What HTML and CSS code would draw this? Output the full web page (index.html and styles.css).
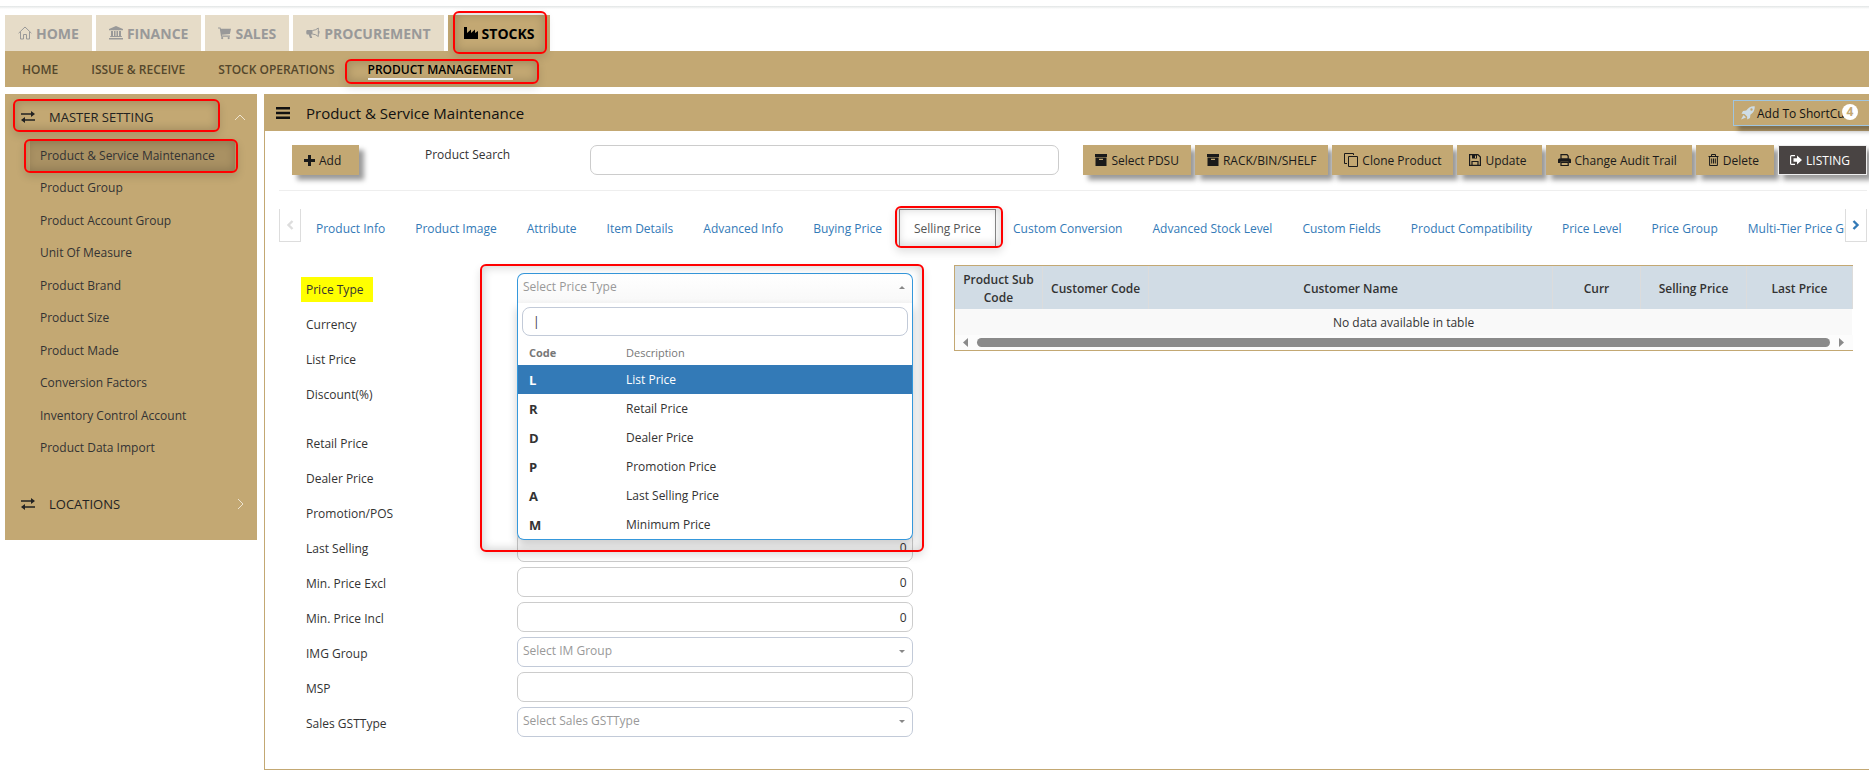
FILE: index.html
```html
<!DOCTYPE html>
<html lang="en">
  <head>
    <title>Product &amp; Service Maintenance</title>
    <meta charset="UTF-8" />
    <meta name="viewport" content="width=device-width, initial-scale=1.0" />
    <link rel="stylesheet" href="styles.css">
  </head>
  <body>
    <div class="top-line"></div>

    <nav class="modules">
      <a href="#">
        <svg width="14" height="14" viewBox="0 0 14 14"><path d="M.6 7.2 7 1l6.400 6.200M2.500 6v7h3V8.500h3V13h3V6" fill="none" stroke="currentColor"/></svg>
        HOME</a>
      <a href="#">
        <svg width="14" height="14" viewBox="0 0 14 14"><path d="M7 0 14 3v1.200H0V3zM2 5h2v5h1V5h1.500v5h1V5H9v5h1V5h2v5h.8v1H1.200v-1H2zM0 12h14v1.500H0z"/></svg>
        FINANCE</a>
      <a href="#">
        <svg width="13" height="14" viewBox="0 0 14 14"><path d="M0 1h2.600l.5 1.500H14L12.800 8l-8.600 1 .2.800h8.400V11H3.300L1.900 2.200H0z"/><circle cx="4.500" cy="12.500" r="1.200"/><circle cx="11.500" cy="12.500" r="1.200"/></svg>
        SALES</a>
      <a href="#">
        <svg width="14" height="14" viewBox="0 0 14 14"><path d="M1 4h5.500v4.500H5L6.300 12H4L2.700 8.500H1c-1 0-1-4.500 0-4.500z"/><path d="M6.500 4.500Q10 4.200 12.300 2v8.500Q10 8.300 6.500 8" fill="none" stroke="currentColor"/><path d="M12.300 5h1.200v2.500h-1.200z"/></svg>
        PROCUREMENT</a>
      <a href="#" class="active marked mark-stocks">
        <svg width="14" height="14" viewBox="0 0 14 14"><path d="M0 1h3v6l4-3.500V7l4-3.500V7l3-2v8H0z"/></svg>
        STOCKS</a>
    </nav>

    <nav class="submenu">
      <a href="#">HOME</a>
      <a href="#">ISSUE &amp; RECEIVE</a>
      <a href="#">STOCK OPERATIONS</a>
      <a href="#" class="active marked mark-pm"><span>PRODUCT MANAGEMENT</span></a>
    </nav>

    <div class="page">
      <aside class="sidebar">
        <a href="#" class="group marked mark-master">
          <svg width="14" height="12" viewBox="0 0 14 12"><path d="M0 2.200h10V0l4 3-4 3V3.800H0zM14 8.200H4V6L0 9l4 3V9.800h10z"/></svg>
          <span>MASTER SETTING</span>
          <svg class="chevron" width="12" height="12" viewBox="0 0 12 12"><path d="m1 9 5-5 5 5"/></svg>
        </a>
        <ul>
          <li class="active marked mark-item"><a href="#">Product &amp; Service Maintenance</a></li>
          <li><a href="#">Product Group</a></li>
          <li><a href="#">Product Account Group</a></li>
          <li><a href="#">Unit Of Measure</a></li>
          <li><a href="#">Product Brand</a></li>
          <li><a href="#">Product Size</a></li>
          <li><a href="#">Product Made</a></li>
          <li><a href="#">Conversion Factors</a></li>
          <li><a href="#">Inventory Control Account</a></li>
          <li><a href="#">Product Data Import</a></li>
        </ul>
        <a href="#" class="group">
          <svg width="14" height="12" viewBox="0 0 14 12"><path d="M0 2.200h10V0l4 3-4 3V3.800H0zM14 8.200H4V6L0 9l4 3V9.800h10z"/></svg>
          <span>LOCATIONS</span>
          <svg class="chevron" width="12" height="12" viewBox="0 0 12 12"><path d="m4 1 5 5-5 5"/></svg>
        </a>
      </aside>

      <main class="panel">
        <header>
          <svg width="14" height="12" viewBox="0 0 14 12"><path d="M0 0h14v2.500H0zM0 4.700h14v2.500H0zM0 9.400h14v2.500H0z"/></svg>
          <h1>Product &amp; Service Maintenance</h1>
          <button class="shortcut">
            <svg width="14" height="14" viewBox="0 0 14 14"><path d="M13.700.3C9.500 0 7 2 5.200 4.600L2 5 .5 7.800l3 .1 2.600 2.600.1 3L9 12l.4-3.200C12 7 14 4.500 13.700.3zM10.500 2.300a1.200 1.200 0 1 1 0 2.400 1.200 1.200 0 0 1 0-2.400zM2.500 9 0 13.500 5 11.500z" fill-rule="evenodd"/></svg>
            Add To ShortCut
            <span class="badge">4</span>
          </button>
        </header>

        <div class="toolbar">
          <button class="add">
            <svg width="11" height="11" viewBox="0 0 11 11"><path d="M4 0h3v4h4v3H7v4H4V7H0V4h4z"/></svg>
            Add</button>
          <label for="search">Product Search</label>
          <input type="text" id="search" name="search" />
          <div class="actions">
            <button>
              <svg width="12" height="12" viewBox="0 0 12 12"><path d="M0 0h12v3H0zM.5 3.600h11V12H.5zM4 4.800V6h4V4.800z" fill-rule="evenodd"/></svg>
              Select PDSU</button>
            <button>
              <svg width="12" height="12" viewBox="0 0 12 12"><path d="M0 0h12v3H0zM.5 3.600h11V12H.5zM4 4.800V6h4V4.800z" fill-rule="evenodd"/></svg>
              RACK/BIN/SHELF</button>
            <button>
              <svg width="14" height="14" viewBox="0 0 14 14"><path d="M4.500 3.500h9v10h-9zM3 10.500H.5V.5h9V2" fill="none" stroke="currentColor"/></svg>
              Clone Product</button>
            <button class="wide">
              <svg width="12" height="12" viewBox="0 0 12 12"><path d="M.6.6h8.300l2.500 2.500v8.300H.6zM3 11.400V7.500h6v3.900" fill="none" stroke="currentColor" stroke-width="1.200"/><path d="M3 1h5v3.500H3zM6 1.500V4h1V1.500z" fill-rule="evenodd"/></svg>
              Update</button>
            <button class="wide">
              <svg width="13" height="12" viewBox="0 0 13 12"><path d="M3 .6h6L10.200 2v3H3zM3 8.500h7.200v3H3z" fill="none" stroke="currentColor" stroke-width="1.200"/><path d="M1 4.500h11l1 1V9h-2.500V7.800h-8V9H0V5.500z"/></svg>
              Change Audit Trail</button>
            <button class="wide">
              <svg width="11" height="12" viewBox="0 0 11 12"><path d="M.5 2.500h10M3.500 2.500v-2h4v2M1.600 2.500v9h7.800v-9M3.700 4.500v5M5.500 4.500v5M7.300 4.500v5" fill="none" stroke="currentColor"/></svg>
              Delete</button>
            <button class="listing">
              <svg width="12" height="10" viewBox="0 0 12 10"><path d="M5 .6H1.500q-.9 0-.9.900v7q0 .9.900.9H5" fill="none" stroke="currentColor" stroke-width="1.200"/><path d="M3.500 3.200H7V.5L12 5 7 9.500V6.800H3.500z"/></svg>
              LISTING</button>
          </div>
        </div>

        <div class="tabs">
          <button class="arrow" aria-label="Previous tabs">
            <svg width="8" height="10" viewBox="0 0 8 10"><path d="M6.500 1 2.500 5l4 4" fill="none" stroke="currentColor" stroke-width="2.400"/></svg>
          </button>
          <div class="tab-list">
            <a href="#">Product Info</a>
            <a href="#">Product Image</a>
            <a href="#">Attribute</a>
            <a href="#">Item Details</a>
            <a href="#">Advanced Info</a>
            <a href="#">Buying Price</a>
            <a href="#" class="active marked mark-tab">Selling Price</a>
            <a href="#">Custom Conversion</a>
            <a href="#">Advanced Stock Level</a>
            <a href="#">Custom Fields</a>
            <a href="#">Product Compatibility</a>
            <a href="#">Price Level</a>
            <a href="#">Price Group</a>
            <a href="#">Multi-Tier Price Group</a>
          </div>
          <button class="arrow next" aria-label="Next tabs">
            <svg width="8" height="10" viewBox="0 0 8 10"><path d="m1.500 1 4 4-4 4" fill="none" stroke="currentColor" stroke-width="2.400"/></svg>
          </button>
        </div>

        <div class="columns">
          <form class="prices">
            <div class="row marked mark-type">
              <label for="price-type"><mark>Price Type</mark></label>
              <div class="select open">
                <select id="price-type"><option>Select Price Type</option></select>
                <div class="menu">
                  <input type="text" aria-label="Filter price types" value="|" />
                  <table>
                    <thead>
                      <tr><th>Code</th><td>Description</td></tr>
                    </thead>
                    <tbody>
                      <tr class="selected"><th>L</th><td>List Price</td></tr>
                      <tr><th>R</th><td>Retail Price</td></tr>
                      <tr><th>D</th><td>Dealer Price</td></tr>
                      <tr><th>P</th><td>Promotion Price</td></tr>
                      <tr><th>A</th><td>Last Selling Price</td></tr>
                      <tr><th>M</th><td>Minimum Price</td></tr>
                    </tbody>
                  </table>
                </div>
              </div>
            </div>
            <div class="row">
              <label for="currency">Currency</label>
              <input type="text" id="currency" />
            </div>
            <div class="row">
              <label for="list-price">List Price</label>
              <input type="text" id="list-price" />
            </div>
            <div class="row spaced">
              <label for="discount">Discount(%)</label>
              <input type="text" id="discount" />
            </div>
            <div class="row">
              <label for="retail">Retail Price</label>
              <input type="text" id="retail" />
            </div>
            <div class="row">
              <label for="dealer">Dealer Price</label>
              <input type="text" id="dealer" />
            </div>
            <div class="row">
              <label for="promotion">Promotion/POS</label>
              <input type="text" id="promotion" />
            </div>
            <div class="row">
              <label for="last-selling">Last Selling</label>
              <input type="text" id="last-selling" value="0" />
            </div>
            <div class="row">
              <label for="min-excl">Min. Price Excl</label>
              <input type="text" id="min-excl" value="0" />
            </div>
            <div class="row">
              <label for="min-incl">Min. Price Incl</label>
              <input type="text" id="min-incl" value="0" />
            </div>
            <div class="row">
              <label for="img-group">IMG Group</label>
              <div class="select">
                <select id="img-group"><option>Select IM Group</option></select>
              </div>
            </div>
            <div class="row">
              <label for="msp">MSP</label>
              <input type="text" id="msp" />
            </div>
            <div class="row">
              <label for="gst">Sales GSTType</label>
              <div class="select">
                <select id="gst"><option>Select Sales GSTType</option></select>
              </div>
            </div>
          </form>

          <div class="customers">
            <table>
              <colgroup>
                <col class="c-sub"><col class="c-code"><col><col class="c-curr"><col class="c-price"><col class="c-price">
              </colgroup>
              <thead>
                <tr>
                  <th>Product Sub Code</th>
                  <th>Customer Code</th>
                  <th>Customer Name</th>
                  <th>Curr</th>
                  <th>Selling Price</th>
                  <th>Last Price</th>
                </tr>
              </thead>
              <tbody>
                <tr><td colspan="6">No data available in table</td></tr>
              </tbody>
            </table>
            <div class="scrollbar">
              <svg width="5" height="9" viewBox="0 0 5 9"><path d="M5 0v9L0 4.500z"/></svg>
              <div class="thumb"></div>
              <svg width="5" height="9" viewBox="0 0 5 9"><path d="M0 0v9l5-4.500z"/></svg>
            </div>
          </div>
        </div>
      </main>
    </div>
  </body>
</html>
```

FILE: styles.css
```css
* {
  box-sizing: border-box;
}
body {
  margin: 0;
  overflow: hidden;
  background-color: #fff;
  color: #333;
  font-family: "Open Sans", "Noto Sans", sans-serif;
  font-size: 12px;
}
a {
  color: inherit;
  text-decoration: none;
}
svg {
  fill: currentColor;
  flex-shrink: 0;
}
button,
input,
select {
  font: inherit;
  color: inherit;
}
button {
  cursor: pointer;
}

.top-line {
  height: 9px;
  margin-bottom: 6px;
  background: linear-gradient(#fff 6px, #e2e5e5 6px, #fff 9px);
}

/* red callouts round the steps of the guide */
.marked {
  position: relative;
}
.marked::before {
  content: "";
  position: absolute;
  z-index: 5;
  border: 2px solid #f00;
  border-radius: 6px;
  box-shadow: 0 4px 8px rgba(0, 0, 0, 0.12), inset 0 0 8px 2px rgba(0, 0, 0, 0.16);
  pointer-events: none;
}
.mark-stocks::before {
  inset: -4px 3px -3px 5px;
}
.mark-pm::before {
  inset: 8px -26px 3px -23px;
}
.mark-master::before {
  inset: 5px 37px 4px 8px;
}
.mark-item::before {
  inset: 0 19px -1px;
}
.mark-tab::before {
  inset: -4px -8px -1px -5px;
}
.mark-type::before {
  inset: -9px -11px -249px 174px;
}

.modules {
  display: flex;
  gap: 4px;
  padding-left: 5px;
}
.modules a {
  display: flex;
  align-items: center;
  gap: 4px;
  height: 36px;
  padding: 0 13px;
  background-color: #e6dcc8;
  color: #999;
  font-size: 14px;
  font-weight: bold;
}
.modules a.active {
  padding: 0 16px;
  background-color: #c3a873;
  color: #000;
}

.submenu {
  display: flex;
  gap: 33px;
  height: 36px;
  margin-left: 5px;
  padding-left: 17px;
  background-color: #c3a873;
  color: #54472c;
  font-weight: 600;
  line-height: 38px;
}
.submenu a.active {
  color: #000;
}
.submenu .active span {
  border-bottom: 2px solid #fff;
}

.page {
  display: flex;
  align-items: flex-start;
  gap: 7px;
  margin: 7px 0 9px 5px;
}

.sidebar {
  width: 252px;
  padding-bottom: 17px;
  background-color: #c3a873;
}
.group {
  display: flex;
  align-items: center;
  gap: 14px;
  height: 42px;
  padding: 4px 11px 0 16px;
  color: #222;
  font-size: 13px;
}
.chevron {
  margin-left: auto;
  fill: none;
  stroke: #eee4d0;
}
.sidebar ul {
  display: flex;
  flex-direction: column;
  height: 325px;
  margin: 3px 0 17px;
  padding: 0;
  list-style: none;
}
.sidebar li {
  display: flex;
  flex: 1;
  align-items: center;
  padding: 0 22px 0 25px;
}
.sidebar li a {
  flex: 1;
  padding: 7px 10px;
}
.sidebar li.active a {
  background-color: #a99163;
}

.panel {
  flex: 1;
  min-width: 0;
  border: solid #c3a873;
  border-width: 0 0 1px 1px;
}
.panel header {
  display: flex;
  align-items: center;
  height: 37px;
  padding-left: 11px;
  background-color: #c3a873;
  color: #111;
}
.panel h1 {
  margin: 0 auto 0 16px;
  font-size: 15px;
  font-weight: normal;
}
.shortcut {
  display: flex;
  position: relative;
  align-items: center;
  gap: 2px;
  width: 142px;
  height: 26px;
  margin-right: -6px;
  padding: 1px 7px 0;
  background-color: #c3a873;
  border: 1px solid #9fc5e0;
  box-shadow: 5px 5px 5px rgba(0, 0, 0, 0.35);
  white-space: nowrap;
}
.shortcut svg {
  fill: #cfdde6;
}
.badge {
  position: absolute;
  top: 3px;
  right: 16px;
  width: 16px;
  height: 16px;
  border-radius: 50%;
  background-color: #fff;
  color: #c3a873;
  font-weight: bold;
  line-height: 16px;
  text-align: center;
}

.toolbar {
  display: flex;
  align-items: flex-start;
  margin: 0 2px 0 14px;
  padding: 14px 0 15px 13px;
  border-bottom: 1px solid #eee;
}
.toolbar button {
  display: flex;
  align-items: center;
  gap: 4px;
  height: 30px;
  padding: 0 12px;
  background-color: #c3a873;
  border: 0;
  box-shadow: 5px 5px 5px rgba(0, 0, 0, 0.4);
  color: #1a1a1a;
  white-space: nowrap;
}
.toolbar .add {
  width: 67px;
}
.toolbar .wide {
  padding-right: 15px;
}
.toolbar label {
  width: 165px;
  margin-left: 66px;
  padding-top: 1px;
}
.toolbar input {
  flex: 1;
  min-width: 0;
}
.actions {
  display: flex;
  gap: 4px;
  margin-left: 24px;
}
.toolbar .listing {
  padding: 0 16px 0 11px;
  background-color: #494443;
  border: 1px solid #eee;
  color: #fff;
}

input,
select {
  height: 30px;
  padding: 0 7px;
  background-color: #fff;
  border: 1px solid #ccc;
  border-radius: 7px;
}

.tabs {
  display: flex;
  align-items: flex-start;
  margin: 18px 2px 0 14px;
}
.arrow {
  width: 22px;
  height: 33px;
  padding: 0;
  background-color: #fff;
  border: 1px solid #ddd;
  border-top: 0;
  color: #ddd;
}
.arrow.next {
  color: #337ab7;
}
.tab-list {
  display: flex;
  flex: 1;
  min-width: 0;
  overflow-x: clip;
}
.tab-list a {
  height: 38px;
  padding: 0 14px;
  border: 1px solid transparent;
  border-bottom: 0;
  color: #337ab7;
  line-height: 38px;
  white-space: nowrap;
}
.tab-list a.active {
  margin: 0 2px;
  border-color: #888;
  color: #555;
}

.columns {
  display: grid;
  grid-template-columns: 5fr 7fr;
  margin: 18px 2px 0 14px;
}
.prices {
  display: flex;
  flex-direction: column;
  gap: 5px;
  padding: 8px 28px 32px 27px;
}
.row {
  display: flex;
  align-items: center;
  height: 30px;
}
.row.spaced {
  margin-bottom: 14px;
}
.row label {
  width: 211px;
  padding-top: 3px;
}
.row mark {
  display: inline-block;
  margin-left: -5px;
  padding: 4px 10px 4px 5px;
  background-color: #ff0;
  color: #333;
}
.row > input {
  flex: 1;
  min-width: 0;
  padding: 0 5px;
  text-align: right;
}
.select {
  flex: 1;
  position: relative;
}
.select::after {
  content: "";
  position: absolute;
  top: 13px;
  right: 8px;
  border: 3px solid transparent;
  border-top-color: #888;
  border-bottom: 0;
}
.select select {
  display: block;
  width: 100%;
  padding: 0 5px 4px;
  border-color: #c2cad8;
  color: #999;
  appearance: none;
}
.select.open::after {
  border-top: 0;
  border-bottom: 3px solid #888;
}
.select.open select {
  border-color: #3598dc;
  border-bottom: 0;
  border-radius: 7px 7px 0 0;
  background: linear-gradient(#fff, #f8f8f8);
}

.menu {
  position: absolute;
  top: 30px;
  left: 0;
  right: 0;
  z-index: 2;
  padding: 4px 0 0;
  background-color: #fff;
  border: 1px solid #3598dc;
  border-top: 0;
  border-radius: 0 0 7px 7px;
  box-shadow: 0 5px 10px rgba(0, 0, 0, 0.2);
}
.menu input {
  display: block;
  width: calc(100% - 8px);
  height: 29px;
  margin: 0 4px 3px;
  padding: 0 10px;
  border-color: #c2cad8;
  border-radius: 8px;
}
.menu table {
  width: 100%;
  border-collapse: collapse;
}
.menu th,
.menu td {
  height: 29px;
  padding: 0;
  text-align: left;
}
.menu th {
  width: 108px;
  padding-left: 11px;
  font-size: 13px;
}
.menu thead th,
.menu thead td {
  height: 26px;
  color: #777;
  font-size: 11px;
}
.menu .selected {
  background-color: #337ab7;
  color: #fff;
}

.customers {
  align-self: start;
  margin: 0 14px 0 13px;
  border: 1px solid #c3a873;
  border-right: 0;
}
.customers table {
  width: 100%;
  border-collapse: collapse;
  table-layout: fixed;
}
.customers th {
  height: 43px;
  padding: 2px 6px 0;
  border-right: 1px solid #dcdcdc;
  background-color: #d1dce5;
  font-weight: 600;
  line-height: 18px;
}
.customers td {
  height: 26px;
  padding: 0;
  background-color: #f9f9f9;
  text-align: center;
}
.c-sub,
.c-curr {
  width: 88px;
}
.c-code,
.c-price {
  width: 106px;
}
.scrollbar {
  display: flex;
  align-items: center;
  gap: 9px;
  height: 15px;
  padding: 0 9px 0 8px;
  background-color: #fcfcfc;
  color: #8a8a8a;
}
.thumb {
  flex: 1;
  height: 9px;
  border-radius: 5px;
  background-color: #8a8a8a;
}
```
